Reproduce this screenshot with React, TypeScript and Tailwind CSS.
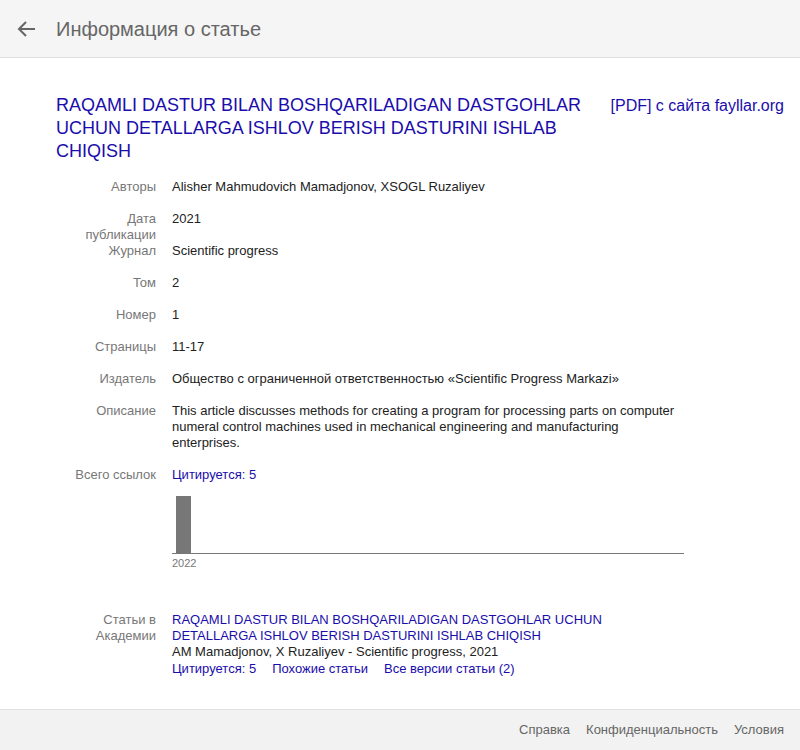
import React from "react";

const F = { fontFamily: '"Liberation Sans", Arial, sans-serif' };

function Row({ label, children }: { label: React.ReactNode; children: React.ReactNode }) {
  return (
    <div className="flex items-start">
      <div className="w-[100px] h-4 shrink-0 text-right text-[13px] leading-4 text-[#777]">{label}</div>
      <div className="ml-4 w-[512px] pb-4 text-[13px] leading-4 text-[#222]">{children}</div>
    </div>
  );
}

export default function App() {
  return (
    <div style={F} className="w-[800px] h-[750px] bg-white flex flex-col">
      <div className="h-[58px] bg-[#f5f5f5] border-b border-[#e0e0e0] flex items-center shrink-0">
        <svg width="24" height="24" viewBox="0 0 24 24" className="ml-[15px]">
          <path d="M20 12H5M11 5l-7 7 7 7" stroke="#666" strokeWidth="2" fill="none" />
        </svg>
        <div className="ml-[17px] text-[20px] text-[#666]">Информация о статье</div>
      </div>

      <div className="flex-1 pl-[56px] pr-4 pt-[36px]">
        <div className="flex items-start">
          <div className="w-[530px] text-[18px] leading-[23px] text-[#1a0dab]">
            RAQAMLI DASTUR BILAN BOSHQARILADIGAN DASTGOHLAR UCHUN DETALLARGA ISHLOV BERISH DASTURINI ISHLAB CHIQISH
          </div>
          <div className="ml-auto text-[16px] leading-[23px] text-[#1a0dab]">[PDF] с сайта fayllar.org</div>
        </div>

        <div className="mt-[16px]">
          <Row label="Авторы">Alisher Mahmudovich Mamadjonov, XSOGL Ruzaliyev</Row>
          <Row label="Дата публикации">2021</Row>
          <Row label="Журнал">Scientific progress</Row>
          <Row label="Том">2</Row>
          <Row label="Номер">1</Row>
          <Row label="Страницы">11-17</Row>
          <Row label="Издатель">Общество с ограниченной ответственностью «Scientific Progress Markazi»</Row>
          <Row label="Описание">
            This article discusses methods for creating a program for processing parts on computer numeral control machines used in mechanical engineering and manufacturing enterprises.
          </Row>
          <Row label="Всего ссылок">
            <div className="text-[#1a0dab]">Цитируется: 5</div>
            <div className="w-[512px] mt-[14px]">
              <div className="h-[57px] flex items-end border-b border-[#777]">
                <div className="ml-1 w-[15px] h-[57px] bg-[#777]" />
              </div>
              <div className="text-[11px] leading-[14px] text-[#777] mt-[2px]">2022</div>
            </div>
          </Row>
          <div className="h-[26px]" />
          <Row label={<span>Статьи в Академии</span>}>
            <div className="text-[#1a0dab] w-[440px]">RAQAMLI DASTUR BILAN BOSHQARILADIGAN DASTGOHLAR UCHUN DETALLARGA ISHLOV BERISH DASTURINI ISHLAB CHIQISH</div>
            <div>AM Mamadjonov, X Ruzaliyev - Scientific progress, 2021</div>
            <div className="flex gap-[16px] text-[#1a0dab] mt-[1px]">
              <span>Цитируется: 5</span>
              <span>Похожие статьи</span>
              <span>Все версии статьи (2)</span>
            </div>
          </Row>
        </div>
      </div>

      <div className="h-[41px] shrink-0 bg-[#f2f2f2] border-t border-[#e0e0e0] flex items-center justify-end pr-4 gap-4 text-[13px] text-[#666]">
        <span>Справка</span>
        <span>Конфиденциальность</span>
        <span>Условия</span>
      </div>
    </div>
  );
}
